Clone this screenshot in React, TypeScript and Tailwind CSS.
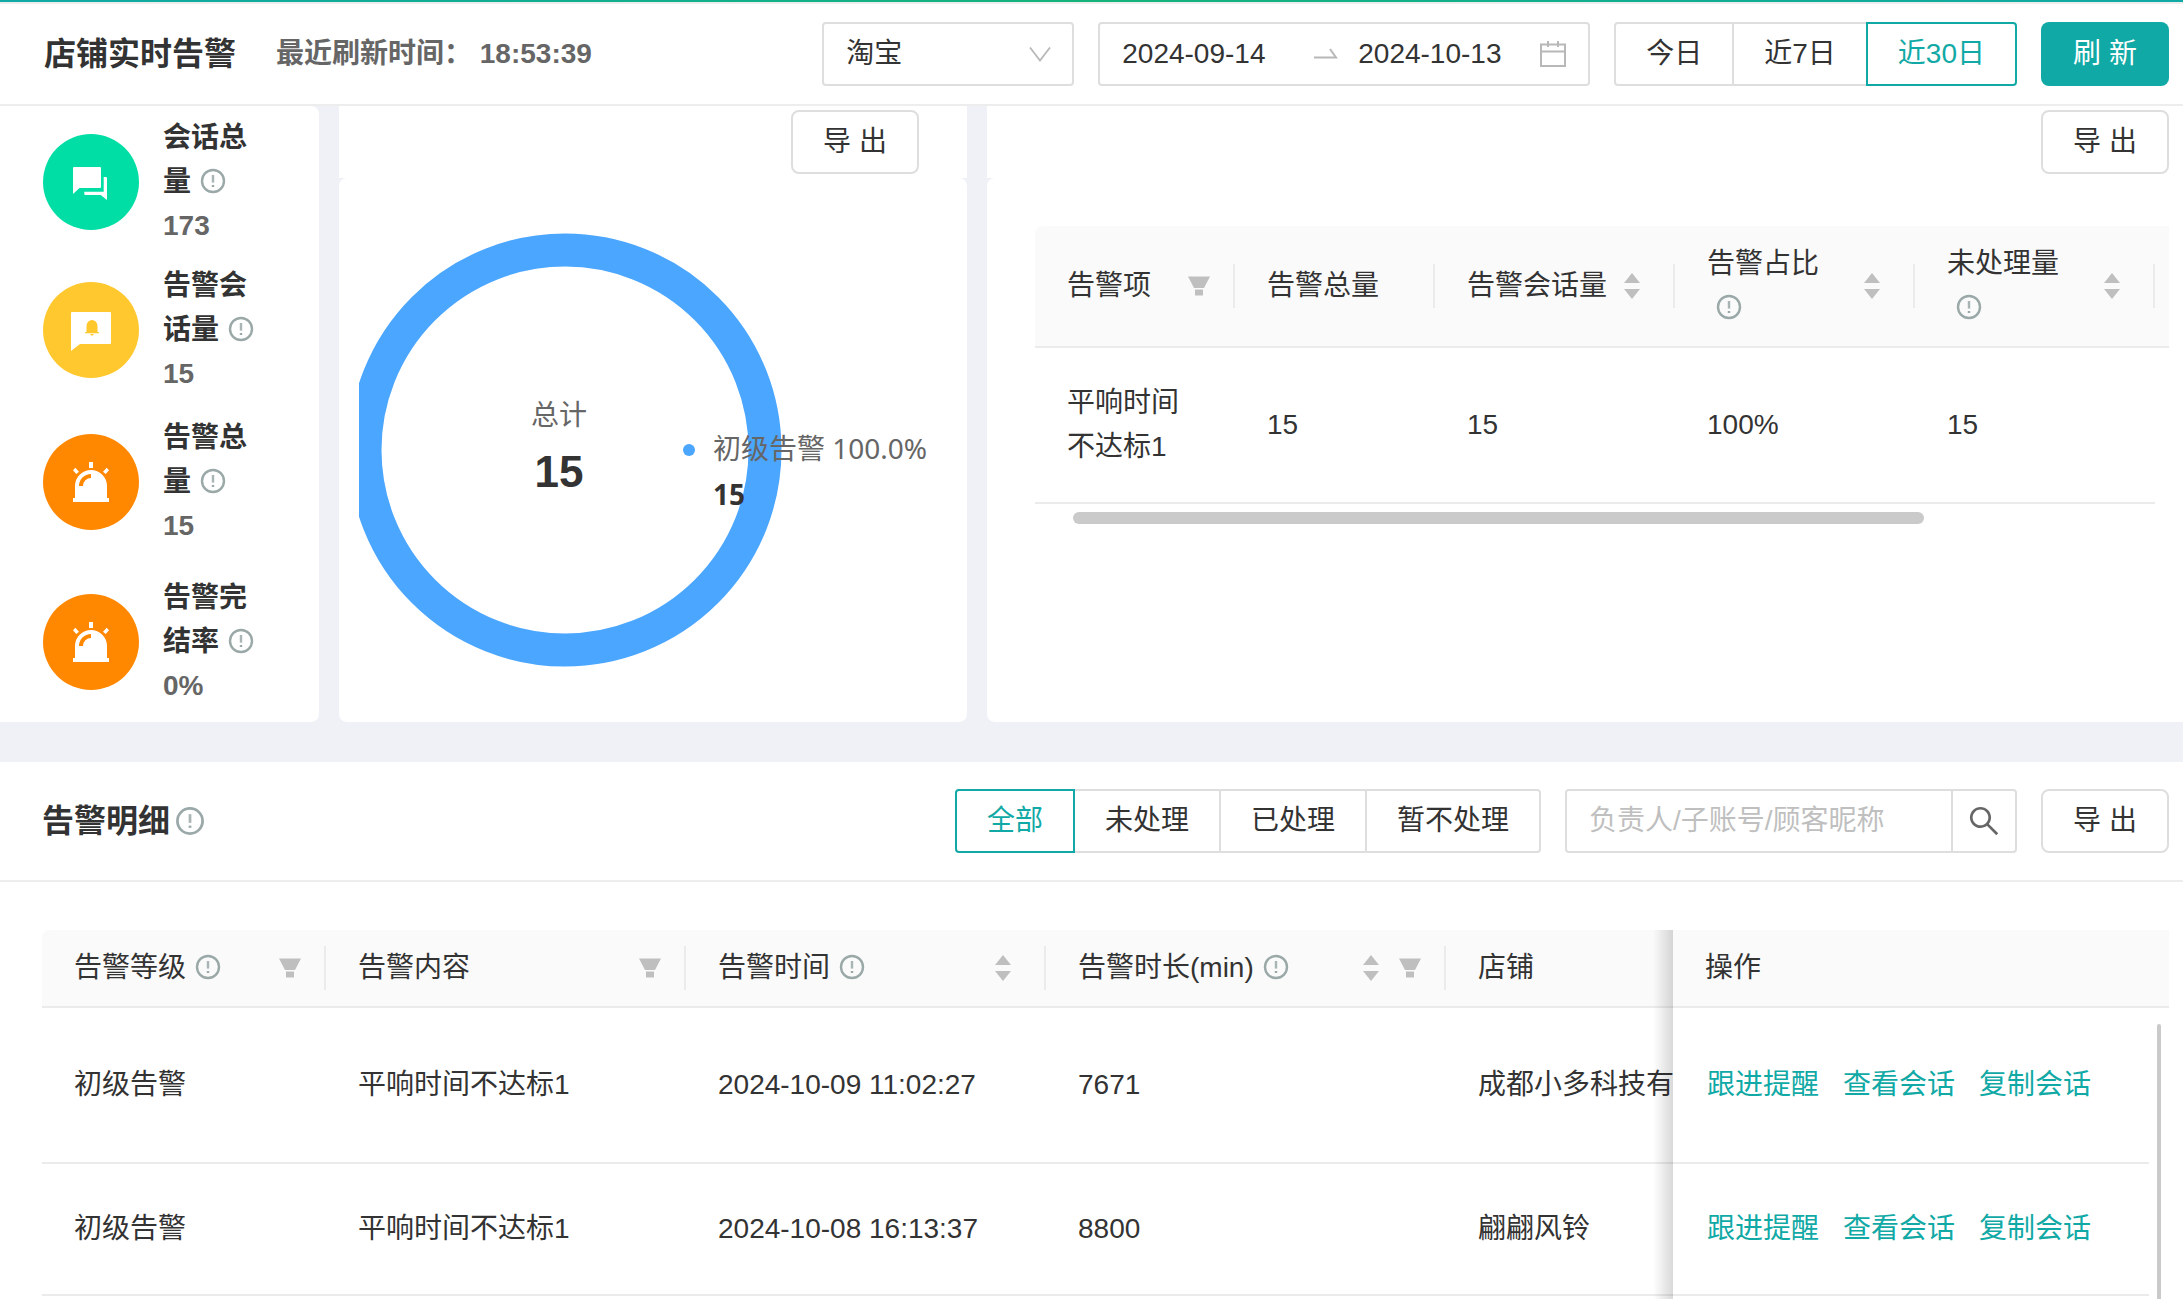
import React, { useState } from "react";
import clsx from "clsx";
import { AiOutlineSearch } from "react-icons/ai";

const InfoIcon: React.FC<{ className?: string }> = ({ className = "ml-2 size-7" }) => (
  <svg viewBox="0 0 28 28" className={clsx("inline-block shrink-0 align-[-4px] text-[#9aa8a8]", className)}>
    <circle cx="14" cy="14" r="11" fill="none" stroke="currentColor" strokeWidth="2.4" />
    <rect x="12.8" y="8" width="2.4" height="7.6" fill="currentColor" opacity="0.85" />
    <rect x="12.8" y="18" width="2.4" height="2" fill="currentColor" />
  </svg>
);

const Sorter: React.FC = () => (
  <button type="button" aria-label="排序" className="shrink-0 text-[#bfbfbf]">
    <svg width="16" height="26" viewBox="0 0 16 26" fill="currentColor">
      <path d="M8 0l8 10H0zM8 26l8-10H0z" />
    </svg>
  </button>
);

const Filter: React.FC = () => (
  <button type="button" aria-label="筛选" className="shrink-0 text-[#bfbfbf]">
    <svg width="22" height="20" viewBox="0 0 22 20" fill="currentColor">
      <path d="M0 0.5h22L16 12H6zM7 13.5h8v6H7z" />
    </svg>
  </button>
);

const ChatIcon = () => (
  <svg viewBox="0 0 96 96" className="size-24 shrink-0">
    <circle cx="48" cy="48" r="48" fill="#00dea5" />
    <path fill="#fff" d="M31 33h26q1 0 1 1v19q0 1-1 1H36.5L30 60V34q0-1 1-1z" />
    <path fill="#fff" d="M60.7 43H63q1 0 1 1v22l-6.3-5H42.3q-1 0-1-1v-2.3h19.4z" />
  </svg>
);

const BellIcon = () => (
  <svg viewBox="0 0 96 96" className="size-24 shrink-0">
    <circle cx="48" cy="48" r="48" fill="#ffc82e" />
    <path fill="#fff" d="M29 30h38q1 0 1 1v30q0 1-1 1H37l-9 7V31q0-1 1-1z" />
    <path fill="#ffc82e" d="M43.5 50v-6a5.5 6 0 0 1 11 0v6l1.5.2v1H42v-1zM47 52h4q-2 3.5-4 0z" />
  </svg>
);

const SirenIcon = () => (
  <svg viewBox="0 0 96 96" className="size-24 shrink-0">
    <circle cx="48" cy="48" r="48" fill="#ff8800" />
    <path
      fill="#fff"
      d="M46 28h4v6h-4zM30 36.3l2.3-2.6 3.7 4-2.7 2.3zM66 36.3l-2.3-2.6-3.7 4 2.7 2.3zM32 64V52a16 16 0 0 1 32 0v12h2v4H30v-4z"
    />
    <path fill="#ff8800" d="M36 52a12 12 0 0 1 12-12v4a8 8 0 0 0-8 8z" />
  </svg>
);

const stats = [
  { label: "会话总量", value: "173", icon: <ChatIcon /> },
  { label: "告警会话量", value: "15", icon: <BellIcon /> },
  { label: "告警总量", value: "15", icon: <SirenIcon /> },
  { label: "告警完结率", value: "0%", icon: <SirenIcon /> },
];

const details = [
  { level: "初级告警", content: "平响时间不达标1", time: "2024-10-09 11:02:27", duration: "7671", shop: "成都小多科技有", height: "h-[156px]" },
  { level: "初级告警", content: "平响时间不达标1", time: "2024-10-08 16:13:37", duration: "8800", shop: "翩翩风铃", height: "h-[132px]" },
];

const actions = ["跟进提醒", "查看会话", "复制会话"];

interface TabsProps {
  items: string[];
  value: string;
  onChange: (item: string) => void;
}

const Tabs: React.FC<TabsProps> = ({ items, value, onChange }) => (
  <div className="flex">
    {items.map((item) => (
      <button
        key={item}
        type="button"
        aria-pressed={item === value}
        onClick={() => onChange(item)}
        className={clsx(
          "-ml-0.5 h-16 whitespace-nowrap border-2 px-[30px] first:ml-0 first:rounded-l last:rounded-r",
          item === value ? "z-10 border-[#10a9a5] text-[#10a9a5]" : "border-[#dedede]"
        )}
      >
        {item}
      </button>
    ))}
  </div>
);

const ExportButton: React.FC = () => (
  <button type="button" className="h-16 w-32 shrink-0 rounded-lg border-2 border-[#dedede] bg-white">
    导 出
  </button>
);

interface HeadCellProps {
  title: string;
  info?: boolean;
  sorter?: boolean;
  filter?: boolean;
  divider?: boolean;
}

const HeadCell: React.FC<HeadCellProps> = ({ title, info, sorter, filter, divider = true }) => (
  <th className="border-b-2 border-[#ebebeb] bg-[#fafafa] py-4 text-left font-normal">
    <div className="flex items-center">
      <div
        className={clsx(
          "flex min-w-0 flex-1 items-center pl-8",
          filter ? "pr-[23px]" : sorter && "pr-[33px]"
        )}
      >
        <span className={clsx("flex-1", sorter && "mr-4")}>
          {title}
          {info && <InfoIcon />}
        </span>
        {sorter && <Sorter />}
        {filter && (
          <span className="ml-5 flex">
            <Filter />
          </span>
        )}
      </div>
      <span className={clsx("h-11 w-0.5", divider && "bg-[#ebebeb]")} />
    </div>
  </th>
);

const AlarmChart: React.FC = () => (
  <svg className="block h-[544px] w-full overflow-hidden">
    <circle cx="206" cy="272" r="200" fill="none" stroke="#4ba6ff" strokeWidth="33" />
    <text x="200" y="247" textAnchor="middle" fill="#666">总计</text>
    <text x="200" y="309" textAnchor="middle" fill="#333" className="text-[44px] font-bold">15</text>
    <circle cx="330" cy="272" r="6" fill="#4ba6ff" />
    <g className="font-['Noto_Sans','Noto_Sans_CJK_SC',sans-serif]">
      <text x="354" y="281" fill="#666">初级告警 100.0%</text>
      <text x="354" y="327" fill="#333" className="font-bold">15</text>
    </g>
  </svg>
);

const App: React.FC = () => {
  const [range, setRange] = useState("近30日");
  const [status, setStatus] = useState("全部");

  return (
    <div className="flex min-h-screen flex-col overflow-hidden bg-[#f0f1f6] font-['Liberation_Sans','Noto_Sans_CJK_SC',sans-serif] text-[28px] leading-[44px] text-[#333]">
      <div className="h-0.5 bg-linear-to-r from-[#10a9a5] via-[#15b37b] to-[#10a9a5]" />
      <header className="flex items-center border-y-2 border-[#ededed] bg-white py-[18px] pl-11 pr-3.5">
        <h1 className="text-[32px] font-bold">店铺实时告警</h1>
        <p className="ml-10 flex-1 font-bold text-[#666]">最近刷新时间： 18:53:39</p>
        <div className="flex gap-6">
          <div className="relative w-[252px]">
            <select aria-label="平台" className="h-16 w-full appearance-none rounded border-2 border-[#dedede] bg-white px-[22px]">
              <option>淘宝</option>
            </select>
            <svg width="22" height="15" viewBox="0 0 22 15" className="pointer-events-none absolute right-[23px] top-[25px]">
              <path d="M1 0.5l10 13 10-13" fill="none" stroke="#b8b8b8" strokeWidth="1.8" />
            </svg>
          </div>
          <div className="flex h-16 w-[492px] items-center rounded border-2 border-[#dedede] px-[22px]">
            <input aria-label="开始日期" defaultValue="2024-09-14" className="w-48 outline-none" />
            <svg width="24" height="12" viewBox="0 0 24 12" className="shrink-0" fill="none" stroke="#b8b8b8" strokeWidth="2">
              <path d="M0 9.5h22L16 1" />
            </svg>
            <input aria-label="结束日期" defaultValue="2024-10-13" className="ml-5 w-0 flex-1 outline-none" />
            <svg width="26" height="26" viewBox="0 0 26 26" className="shrink-0" fill="none" stroke="#b8b8b8" strokeWidth="2">
              <path d="M1 3.5h24v21.5H1zM1 10.5h24M8 0v6M18 0v6" />
            </svg>
          </div>
          <Tabs items={["今日", "近7日", "近30日"]} value={range} onChange={setRange} />
          <button type="button" className="h-16 w-32 rounded-lg bg-[#10a9a5] text-white">
            刷 新
          </button>
        </div>
      </header>

      <main className="grid grid-cols-[319fr_628fr_1196fr] gap-5">
        <section className="grid grid-rows-[152px_144px_160px_160px] rounded-r-lg bg-white pl-[43px]">
          {stats.map((stat) => (
            <div key={stat.label} className="flex items-center gap-6">
              {stat.icon}
              <div className="w-24 font-bold">
                <p className="break-all">
                  {stat.label}
                  <InfoIcon />
                </p>
                <p className="text-[#666]">{stat.value}</p>
              </div>
            </div>
          ))}
        </section>

        <section className="min-w-0">
          <div className="flex justify-end bg-white pb-1 pr-12 pt-1">
            <ExportButton />
          </div>
          <div className="rounded-lg bg-white px-5">
            <AlarmChart />
          </div>
        </section>

        <section className="flex min-w-0 flex-col">
          <div className="flex justify-end bg-white pb-1 pr-3.5 pt-1">
            <ExportButton />
          </div>
          <div className="flex-1 rounded-l-lg bg-white pl-12 pr-3.5 pt-12">
            <table className="w-full table-fixed border-separate border-spacing-0 overflow-hidden rounded-tl-lg">
              <colgroup>
                <col className="w-[200px]" />
                <col className="w-[200px]" />
                <col className="w-[240px]" />
                <col className="w-[240px]" />
                <col className="w-[240px]" />
                <col />
              </colgroup>
              <thead>
                <tr>
                  <HeadCell title="告警项" filter />
                  <HeadCell title="告警总量" />
                  <HeadCell title="告警会话量" sorter />
                  <HeadCell title="告警占比" info sorter />
                  <HeadCell title="未处理量" info sorter />
                  <td className="border-b-2 border-[#ebebeb] bg-[#fafafa]" />
                </tr>
              </thead>
              <tbody>
                <tr className="h-[156px] *:border-b-2 *:border-[#ebebeb] *:px-8">
                  <td>平响时间不达标1</td>
                  <td>15</td>
                  <td>15</td>
                  <td>100%</td>
                  <td>15</td>
                </tr>
              </tbody>
            </table>
            <div className="ml-[38px] mt-2 h-3 w-3/4 rounded-full bg-[#cacaca]" />
          </div>
        </section>
      </main>

      <section className="mt-10 flex flex-1 flex-col bg-white">
        <div className="flex h-[120px] items-center justify-between border-b-2 border-[#ededed] pl-[42px] pr-3.5">
          <h2 className="flex items-center text-[32px] font-bold">
            告警明细
            <InfoIcon className="ml-1 size-8" />
          </h2>
          <div className="flex gap-6">
            <Tabs items={["全部", "未处理", "已处理", "暂不处理"]} value={status} onChange={setStatus} />
            <div className="flex h-16 w-[452px] rounded border-2 border-[#dedede]">
              <input
                aria-label="搜索"
                placeholder="负责人/子账号/顾客昵称"
                className="min-w-0 flex-1 px-[22px] outline-none placeholder:text-[#bfbfbf]"
              />
              <button type="button" aria-label="搜索" className="grid w-16 place-items-center border-l-2 border-[#dedede] text-[#666]">
                <AiOutlineSearch size={36} />
              </button>
            </div>
            <ExportButton />
          </div>
        </div>

        <div className="relative ml-[42px] mr-3.5 mt-12 flex-1">
          <table className="w-full table-fixed border-separate border-spacing-0 overflow-hidden rounded-tl-lg">
            <colgroup>
              <col className="w-[284px]" />
              <col className="w-[360px]" />
              <col className="w-[360px]" />
              <col className="w-[400px]" />
              <col />
              <col className="w-[476px]" />
              <col className="w-5" />
            </colgroup>
            <thead>
              <tr>
                <HeadCell title="告警等级" info filter />
                <HeadCell title="告警内容" filter />
                <HeadCell title="告警时间" info sorter />
                <HeadCell title="告警时长(min)" info sorter filter />
                <HeadCell title="店铺" divider={false} />
                <HeadCell title="操作" divider={false} />
                <td className="border-b-2 border-[#ebebeb] bg-[#fafafa]" />
              </tr>
            </thead>
            <tbody>
              {details.map((row) => (
                <tr key={row.time} className={clsx("*:border-b-2 *:border-[#ebebeb] *:pl-8", row.height)}>
                  <td>{row.level}</td>
                  <td>{row.content}</td>
                  <td>{row.time}</td>
                  <td>{row.duration}</td>
                  <td className="whitespace-nowrap">{row.shop}</td>
                  <td>
                    <div className="flex gap-6 pl-0.5 text-[#10a9a5]">
                      {actions.map((action) => (
                        <a key={action} href="#">
                          {action}
                        </a>
                      ))}
                    </div>
                  </td>
                </tr>
              ))}
            </tbody>
          </table>
          {/* shadow of the pinned column */}
          <div className="pointer-events-none absolute bottom-0 right-[496px] top-0 w-5 bg-linear-to-r from-transparent to-black/15" />
          {/* scroll thumb */}
          <div className="absolute bottom-0 right-2 top-[94px] w-1 rounded-t-full bg-[#cacaca]" />
        </div>
      </section>
    </div>
  );
};

export default App;
